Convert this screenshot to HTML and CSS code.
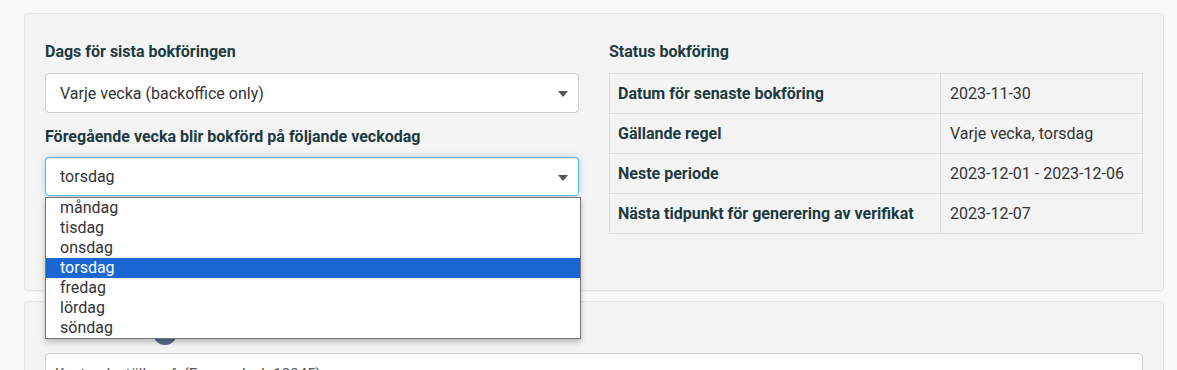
FILE: index.html
```html
<!DOCTYPE html>
<html lang="sv">
<head>
<meta charset="utf-8">
<title>Bokföring</title>
<link rel="stylesheet" href="styles.css">
</head>
<body>
<div class="page">
  <section class="panel panel-top">
    <div class="cols">
      <div class="col">
        <div class="label">Dags för sista bokföringen</div>
        <div class="select">
          <span>Varje vecka (backoffice only)</span>
          <span class="caret"></span>
        </div>
        <div class="label label-2">Föregående vecka blir bokförd på följande veckodag</div>
        <div class="select-wrap">
          <div class="select focused">
            <span>torsdag</span>
            <span class="caret"></span>
          </div>
          <ul class="dropdown">
            <li>måndag</li>
            <li>tisdag</li>
            <li>onsdag</li>
            <li class="active">torsdag</li>
            <li>fredag</li>
            <li>lördag</li>
            <li>söndag</li>
          </ul>
        </div>
      </div>
      <div class="col">
        <div class="label">Status bokföring</div>
        <table class="status">
          <tr><th>Datum för senaste bokföring</th><td>2023-11-30</td></tr>
          <tr><th>Gällande regel</th><td>Varje vecka, torsdag</td></tr>
          <tr><th>Neste periode</th><td>2023-12-01 - 2023-12-06</td></tr>
          <tr><th>Nästa tidpunkt för generering av verifikat</th><td>2023-12-07</td></tr>
        </table>
      </div>
    </div>
  </section>
  <section class="panel panel-bottom">
    <div class="label-row">
      <span class="label">Kostnadsställe</span>
      <span class="info">i</span>
    </div>
    <div class="input">Kostnadsställe ref. (Exempel: ab 12345)</div>
  </section>
</div>
</body>
</html>
```

FILE: styles.css
```css
* { box-sizing: border-box; }
html, body { margin: 0; padding: 0; }
body {
  background: #f9f9f9;
  font-family: Roboto, "Noto Sans", Arial, sans-serif;
  font-size: 16px;
  color: #333;
  width: 1177px;
  height: 370px;
  overflow: hidden;
}
.page {
  padding: 13px 13px 0 24px;
  display: flex;
  flex-direction: column;
  gap: 10px;
}
.panel {
  background: #f4f4f4;
  border: 1px solid #e2e2e2;
  border-radius: 4px;
  box-shadow: 0 1px 1px rgba(0,0,0,0.03);
}
.panel-top {
  padding: 28px 20px 56px 20px;
}
.cols {
  display: grid;
  grid-template-columns: 1fr 1fr;
  column-gap: 30px;
}
.label {
  font-weight: 700;
  color: #1c3a40;
  line-height: 20px;
  margin-bottom: 11px;
}
.label-2 { margin-top: 14px; margin-bottom: 10px; }
.select {
  height: 40px;
  background: #fff;
  border: 1px solid #cccccc;
  border-radius: 4px;
  padding: 0 10px 0 14px;
  display: flex;
  align-items: center;
  justify-content: space-between;
  color: #333;
}
.select.focused {
  height: 39px;
  border-color: #66afe9;
  box-shadow: inset 0 1px 1px rgba(0,0,0,.075), 0 0 6px rgba(102,175,233,.5);
}
.caret {
  width: 0;
  height: 0;
  border-left: 5px solid transparent;
  border-right: 5px solid transparent;
  border-top: 6px solid #555;
  margin-top: 2px;
}
.select-wrap { position: relative; }
.dropdown {
  position: absolute;
  left: 0;
  top: 40px;
  width: 536px;
  margin: 0;
  padding: 0;
  list-style: none;
  background: #fff;
  border: 1px solid #767676;
  box-shadow: 0 3px 6px rgba(0,0,0,0.25);
  z-index: 10;
}
.dropdown li {
  height: 20px;
  line-height: 20px;
  padding-left: 14px;
  color: #333;
}
.dropdown li.active {
  background: #1a67d3;
  color: #fff;
}
.status {
  width: 100%;
  border-collapse: collapse;
}
.status th, .status td {
  border: 1px solid #dddddd;
  height: 40px;
  padding: 0 8px;
  text-align: left;
  line-height: 20px;
}
.status th {
  font-weight: 700;
  color: #1c3a40;
  width: 331px;
}
.status td { color: #333; padding-left: 9px; }
.panel-bottom {
  padding: 19px 20px 20px 20px;
  height: 120px;
}
.label-row {
  display: flex;
  align-items: center;
  gap: 8px;
  margin-bottom: 8px;
}
.label-row .label { margin: 0; font-size: 15px; }
.info {
  width: 24px;
  height: 24px;
  border-radius: 50%;
  background: #5a6e8c;
  color: #fff;
  font-size: 13px;
  font-weight: 700;
  display: flex;
  align-items: center;
  justify-content: center;
}
.input {
  height: 40px;
  background: #fff;
  border: 1px solid #cccccc;
  border-radius: 4px;
  padding: 10px 9px;
  font-size: 15px;
  line-height: 20px;
  color: #555;
}
```
